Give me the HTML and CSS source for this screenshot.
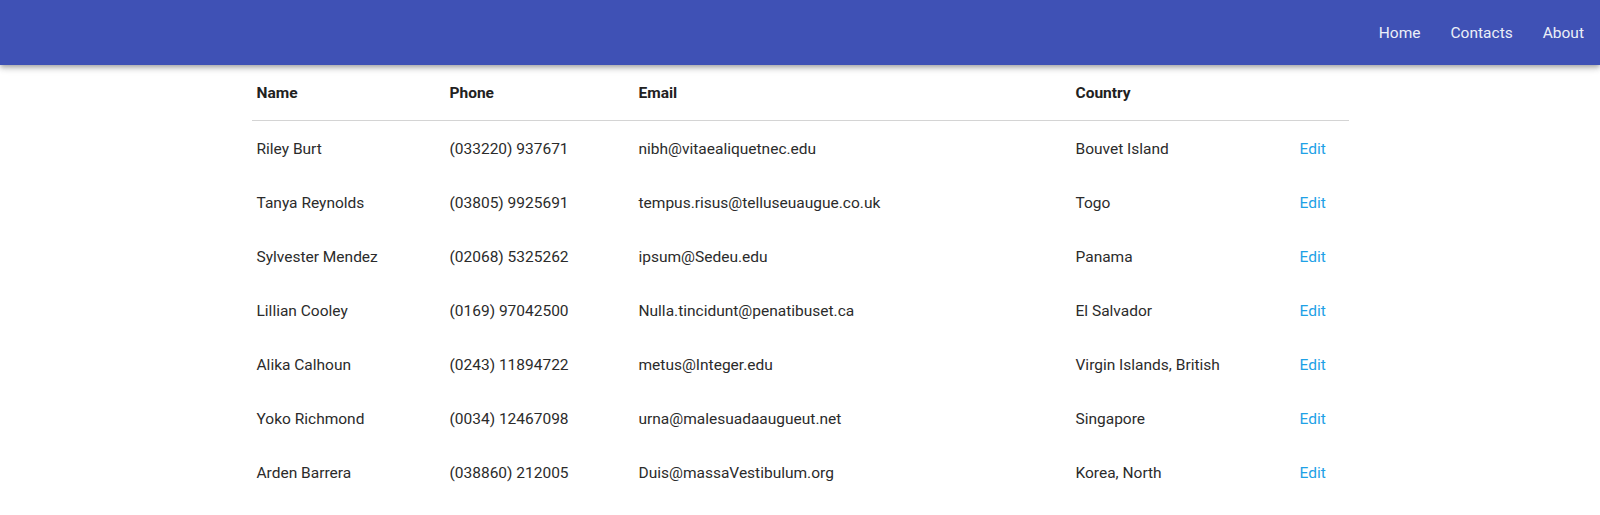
FILE: index.html
```html
<!DOCTYPE html>
<html lang="en">
  <head>
    <meta charset="UTF-8" />
    <meta name="viewport" content="width=device-width, initial-scale=1.0" />
    <title>Contacts</title>
    <link rel="stylesheet" href="styles.css">
  </head>
  <body>
    <!-- Top bar -->
    <header class="app-bar">
      <nav class="nav">
        <a href="#" class="nav-link">Home</a>
        <a href="#" class="nav-link">Contacts</a>
        <a href="#" class="nav-link">About</a>
      </nav>
    </header>

    <main class="content">
      <table class="contacts">
        <thead>
          <tr>
            <th class="col-name">Name</th>
            <th class="col-phone">Phone</th>
            <th class="col-email">Email</th>
            <th class="col-country">Country</th>
            <th class="col-action"></th>
          </tr>
        </thead>
        <tbody>
          <tr>
            <td>Riley Burt</td>
            <td>(033220) 937671</td>
            <td>nibh@vitaealiquetnec.edu</td>
            <td>Bouvet Island</td>
            <td><a href="#" class="edit">Edit</a></td>
          </tr>
          <tr>
            <td>Tanya Reynolds</td>
            <td>(03805) 9925691</td>
            <td>tempus.risus@telluseuaugue.co.uk</td>
            <td>Togo</td>
            <td><a href="#" class="edit">Edit</a></td>
          </tr>
          <tr>
            <td>Sylvester Mendez</td>
            <td>(02068) 5325262</td>
            <td>ipsum@Sedeu.edu</td>
            <td>Panama</td>
            <td><a href="#" class="edit">Edit</a></td>
          </tr>
          <tr>
            <td>Lillian Cooley</td>
            <td>(0169) 97042500</td>
            <td>Nulla.tincidunt@penatibuset.ca</td>
            <td>El Salvador</td>
            <td><a href="#" class="edit">Edit</a></td>
          </tr>
          <tr>
            <td>Alika Calhoun</td>
            <td>(0243) 11894722</td>
            <td>metus@Integer.edu</td>
            <td>Virgin Islands, British</td>
            <td><a href="#" class="edit">Edit</a></td>
          </tr>
          <tr>
            <td>Yoko Richmond</td>
            <td>(0034) 12467098</td>
            <td>urna@malesuadaaugueut.net</td>
            <td>Singapore</td>
            <td><a href="#" class="edit">Edit</a></td>
          </tr>
          <tr>
            <td>Arden Barrera</td>
            <td>(038860) 212005</td>
            <td>Duis@massaVestibulum.org</td>
            <td>Korea, North</td>
            <td><a href="#" class="edit">Edit</a></td>
          </tr>
        </tbody>
      </table>
    </main>
  </body>
</html>
```

FILE: styles.css
```css
* {
  margin: 0;
  padding: 0;
  box-sizing: border-box;
}

body {
  font-family: Roboto, "Liberation Sans", sans-serif;
  background: #fff;
  color: rgba(0, 0, 0, 0.87);
}

.app-bar {
  height: 65px;
  background-color: #3f51b5;
  box-shadow: 0 2px 4px -1px rgba(0, 0, 0, 0.2), 0 4px 5px 0 rgba(0, 0, 0, 0.14),
    0 1px 10px 0 rgba(0, 0, 0, 0.12);
  display: flex;
  align-items: center;
  justify-content: flex-end;
  padding-right: 16px;
  position: relative;
  z-index: 2;
}

.nav {
  display: flex;
  gap: 30px;
}

.nav-link {
  color: #eceff8;
  text-decoration: none;
  font-size: 15.5px;
}

.content {
  display: flex;
  justify-content: center;
}

.contacts {
  width: 1097px;
  border-collapse: collapse;
  font-size: 15.5px;
}

.contacts th {
  text-align: left;
  font-weight: 700;
  color: #212121;
  height: 55px;
  padding: 2px 5px 0;
  border-bottom: 1px solid #d4d4d4;
}

.contacts td {
  height: 54px;
  padding: 3px 5px 0;
  color: #2b2b2b;
}

.col-name {
  width: 193px;
}
.col-phone {
  width: 189px;
}
.col-email {
  width: 437px;
}
.col-country {
  width: 224px;
}

.edit {
  color: #1ea1e6;
  text-decoration: none;
}
```
